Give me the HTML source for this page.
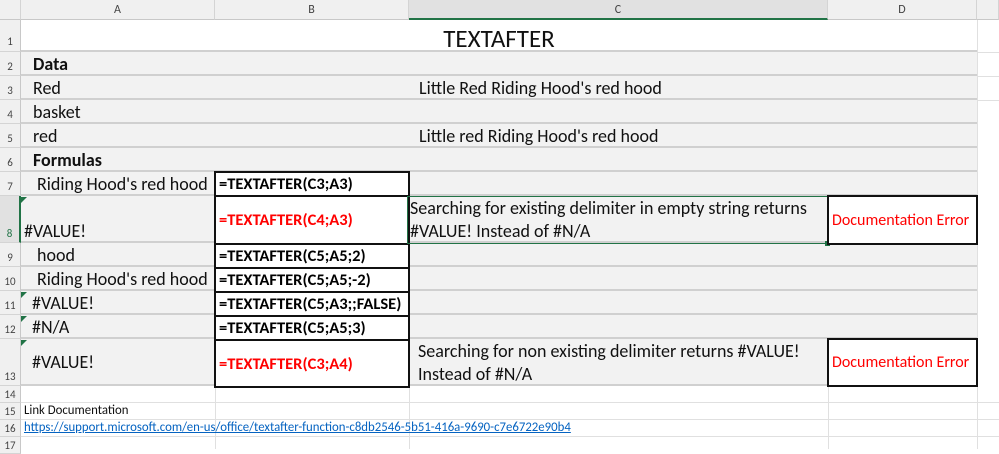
<!DOCTYPE html><html><head><style>
body{margin:0;width:999px;height:449px;overflow:hidden;background:#fff;font-family:Calibri,"Liberation Sans",sans-serif;position:relative}
div{position:absolute;box-sizing:border-box}
.ch{top:0;height:20px;background:#f0f0f0;border-right:1px solid #d4d4d4;border-bottom:1px solid #c8c8c8;font-size:12px;color:#444;text-align:center;line-height:20px}
.rh{left:0;width:21px;background:#f0f0f0;border-bottom:1px solid #d4d4d4;border-right:1px solid #c8c8c8;font-size:11px;color:#444;text-align:center}
.g{left:21px;width:956px;background:#f2f2f2;border-bottom:2px solid #d0d0d0}
.t{font-size:18px;color:#111;white-space:nowrap}
.b{background:#fff;border:2px solid #111;font-weight:bold;font-size:16.5px;white-space:nowrap;padding-left:3px;display:flex;align-items:center}
.red{color:#f00}
.tri{width:0;height:0;border-top:6px solid #217346;border-right:6px solid transparent}
</style></head><body>
<div class="ch" style="left:0;width:21px"></div>
<div class="ch" style="left:21px;width:194px">A</div>
<div class="ch" style="left:215px;width:194px">B</div>
<div class="ch" style="left:409px;width:419px;background:#e1e1e1;border-bottom:2px solid #217346">C</div>
<div class="ch" style="left:828px;width:149px">D</div>
<div class="ch" style="left:977px;width:22px"></div>
<div style="left:21px;top:386px;width:978px;height:63px;background:#fff"></div>
<div style="left:21px;top:402px;width:978px;height:1px;background:#e0e0e0"></div>
<div style="left:21px;top:419px;width:978px;height:1px;background:#e0e0e0"></div>
<div style="left:21px;top:436px;width:978px;height:1px;background:#e0e0e0"></div>
<div style="left:215px;top:386px;width:1px;height:63px;background:#e0e0e0"></div>
<div style="left:409px;top:386px;width:1px;height:63px;background:#e0e0e0"></div>
<div style="left:828px;top:386px;width:1px;height:63px;background:#e0e0e0"></div>
<div style="left:977px;top:20px;width:1px;height:429px;background:#e0e0e0"></div>
<div style="left:977px;top:52px;width:22px;height:1px;background:#e0e0e0"></div>
<div style="left:977px;top:76px;width:22px;height:1px;background:#e0e0e0"></div>
<div style="left:977px;top:100px;width:22px;height:1px;background:#e0e0e0"></div>
<div style="left:21px;top:20px;width:956px;height:32px;border-bottom:2px solid #d0d0d0"></div>
<div class="g" style="top:52px;height:24px"></div>
<div class="g" style="top:76px;height:24px"></div>
<div class="g" style="top:100px;height:24px"></div>
<div class="g" style="top:124px;height:24px"></div>
<div class="g" style="top:148px;height:24px"></div>
<div class="g" style="top:172px;height:24px"></div>
<div class="g" style="top:196px;height:47px"></div>
<div class="g" style="top:243px;height:24px"></div>
<div class="g" style="top:267px;height:24px"></div>
<div class="g" style="top:291px;height:24px"></div>
<div class="g" style="top:315px;height:24px"></div>
<div class="g" style="top:339px;height:47px"></div>
<div class="rh" style="top:20px;height:32px;line-height:44px">1</div>
<div class="rh" style="top:52px;height:24px;line-height:30px">2</div>
<div class="rh" style="top:76px;height:24px;line-height:30px">3</div>
<div class="rh" style="top:100px;height:24px;line-height:30px">4</div>
<div class="rh" style="top:124px;height:24px;line-height:30px">5</div>
<div class="rh" style="top:148px;height:24px;line-height:30px">6</div>
<div class="rh" style="top:172px;height:24px;line-height:30px">7</div>
<div class="rh" style="top:196px;height:47px;line-height:76px;background:#e1e1e1;border-right:2px solid #217346;color:#217346">8</div>
<div class="rh" style="top:243px;height:24px;line-height:30px">9</div>
<div class="rh" style="top:267px;height:24px;line-height:30px">10</div>
<div class="rh" style="top:291px;height:24px;line-height:30px">11</div>
<div class="rh" style="top:315px;height:24px;line-height:30px">12</div>
<div class="rh" style="top:339px;height:47px;line-height:76px">13</div>
<div class="rh" style="top:386px;height:17px;line-height:17px">14</div>
<div class="rh" style="top:403px;height:17px;line-height:17px">15</div>
<div class="rh" style="top:420px;height:17px;line-height:17px">16</div>
<div class="rh" style="top:437px;height:17px;line-height:17px">17</div>
<div class="t" style="left:21px;width:956px;top:23px;font-size:25px;text-align:center">TEXTAFTER</div>
<div class="t" style="left:33px;top:53px;font-weight:bold">Data</div>
<div class="t" style="left:33px;top:77px">Red</div>
<div class="t" style="left:419px;top:77px">Little Red Riding Hood's red hood</div>
<div class="t" style="left:33px;top:101px">basket</div>
<div class="t" style="left:33px;top:125px">red</div>
<div class="t" style="left:419px;top:125px">Little red Riding Hood's red hood</div>
<div class="t" style="left:33px;top:149px;font-weight:bold">Formulas</div>
<div class="t" style="left:37px;top:173px">Riding Hood's red hood</div>
<div class="t" style="left:24px;top:220px">#VALUE!</div>
<div class="t" style="left:37px;top:244px">hood</div>
<div class="t" style="left:37px;top:268px">Riding Hood's red hood</div>
<div class="t" style="left:32px;top:292px">#VALUE!</div>
<div class="t" style="left:32px;top:316px">#N/A</div>
<div class="t" style="left:32px;top:351px">#VALUE!</div>
<div class="tri" style="left:21px;top:197px"></div>
<div class="tri" style="left:21px;top:292px"></div>
<div class="tri" style="left:21px;top:316px"></div>
<div class="tri" style="left:21px;top:340px"></div>
<div class="b" style="left:214px;top:171px;width:196px;height:26px">=TEXTAFTER(C3;A3)</div>
<div class="b red" style="left:214px;top:195px;width:196px;height:50px">=TEXTAFTER(C4;A3)</div>
<div class="b" style="left:214px;top:243px;width:196px;height:26px">=TEXTAFTER(C5;A5;2)</div>
<div class="b" style="left:214px;top:267px;width:196px;height:26px">=TEXTAFTER(C5;A5;-2)</div>
<div class="b" style="left:214px;top:291px;width:196px;height:26px">=TEXTAFTER(C5;A3;;FALSE)</div>
<div class="b" style="left:214px;top:315px;width:196px;height:26px">=TEXTAFTER(C5;A5;3)</div>
<div class="b red" style="left:214px;top:339px;width:196px;height:49px">=TEXTAFTER(C3;A4)</div>
<div style="left:407px;top:196px;width:421px;height:48px;border:1px solid #217346"></div>
<div style="left:825px;top:241px;width:5px;height:5px;background:#217346"></div>
<div class="t" style="left:410px;top:197px;line-height:23px">Searching for existing delimiter in empty string returns<br>#VALUE! Instead of #N/A</div>
<div class="t" style="left:418px;top:340px;line-height:23px">Searching for non existing delimiter returns #VALUE!<br>Instead of #N/A</div>
<div class="b red" style="left:827px;top:195px;width:151px;height:50px;font-weight:normal;font-size:16px">Documentation Error</div>
<div class="b red" style="left:827px;top:338px;width:151px;height:49px;font-weight:normal;font-size:16px">Documentation Error</div>
<div class="t" style="left:24px;top:403px;font-size:12.8px">Link Documentation</div>
<div class="t" style="left:24px;top:420px;font-size:12.8px;color:#0563c1;text-decoration:underline">https://support.microsoft.com/en-us/office/textafter-function-c8db2546-5b51-416a-9690-c7e6722e90b4</div>
</body></html>
